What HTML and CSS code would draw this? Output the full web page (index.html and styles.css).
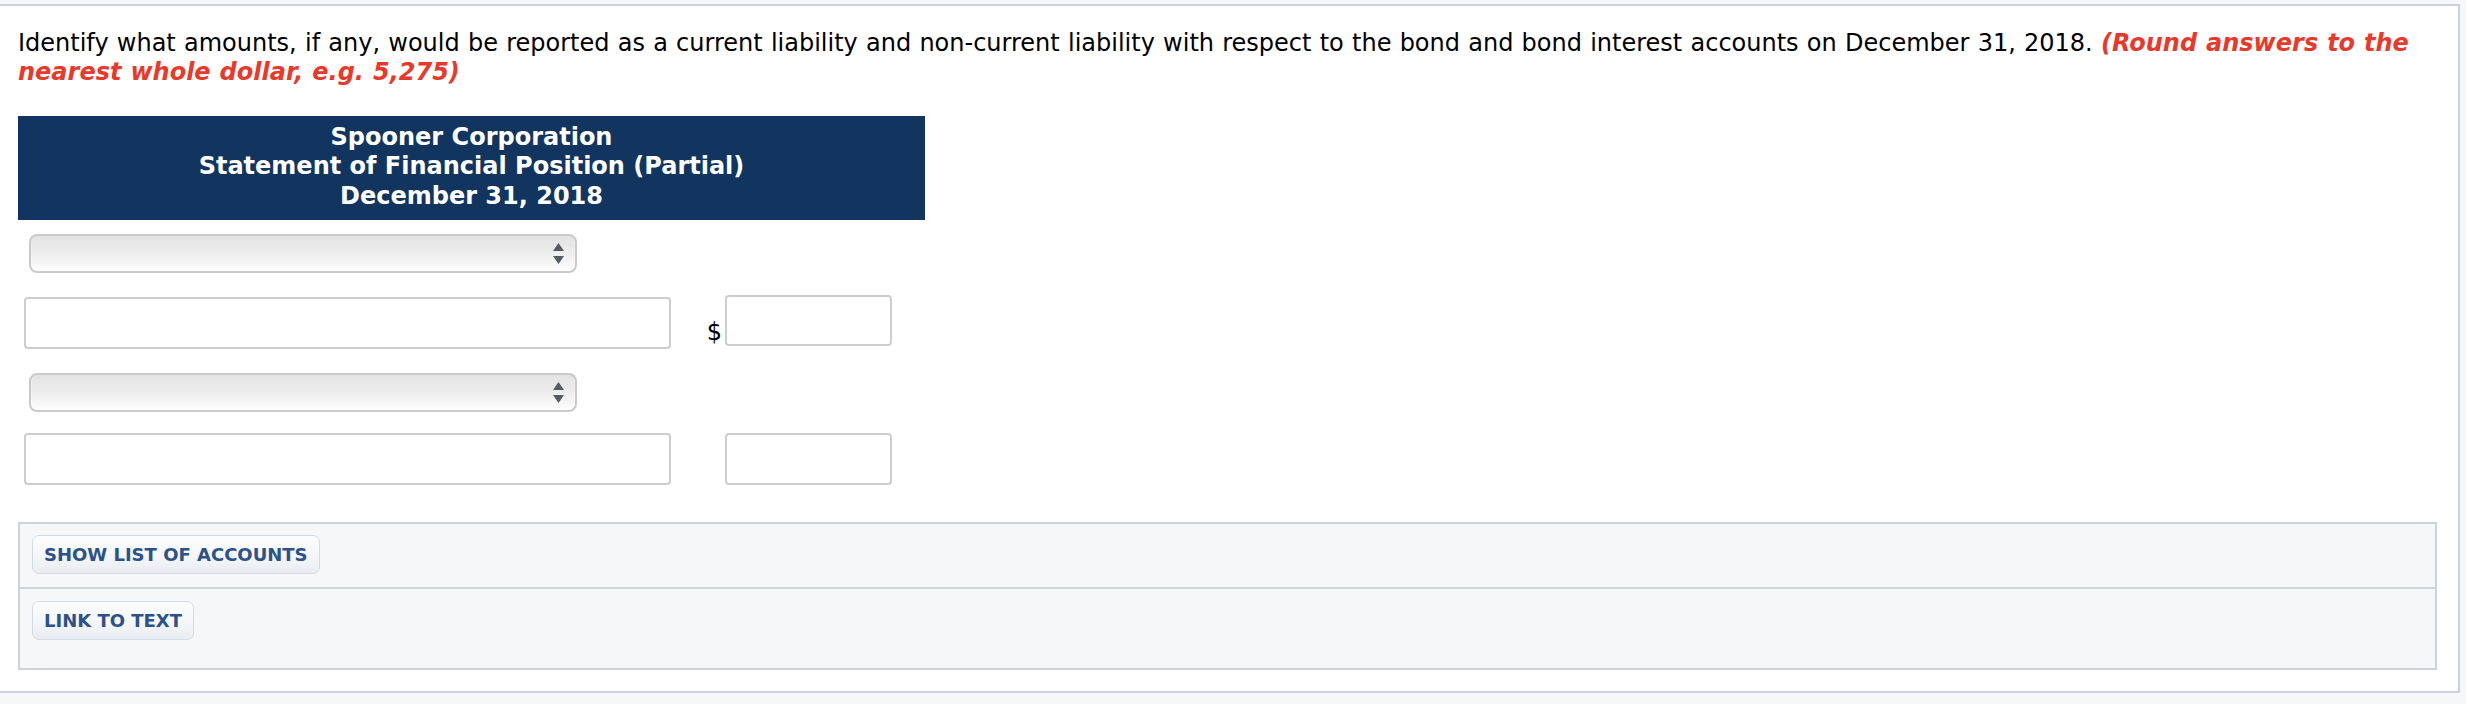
FILE: index.html
```html
<!doctype html>
<html lang="en">
  <head>
    <meta charset="UTF-8" />
    <meta name="viewport" content="width=device-width, initial-scale=1.0" />
    <title>Spooner Corporation - Bonds</title>
    <link rel="stylesheet" href="styles.css">
  </head>
  <body>
    <div class="question">
      <p class="prompt">
        Identify what amounts, if any, would be reported as a current liability and non-current liability with respect to the bond and bond interest accounts on December 31, 2018.
        <em class="hint">(Round answers to the</em>
        <em class="hint">nearest whole dollar, e.g. 5,275)</em>
      </p>

      <!-- Partial balance sheet -->
      <div class="statement">
        <div class="statement-head">
          <div>Spooner Corporation</div>
          <div>Statement of Financial Position (Partial)</div>
          <div>December 31, 2018</div>
        </div>

        <div class="select-row">
          <div class="select-wrap">
            <select class="account-select"><option></option></select>
            <svg class="select-arrows" viewBox="0 0 11 21" width="11" height="21">
              <polygon points="0,8 5.5,0 11,8" />
              <polygon points="0,13 11,13 5.5,21" />
            </svg>
          </div>
        </div>

        <div class="entry-row entry-row-first">
          <input type="text" class="label-input" />
          <span class="currency">$</span>
          <input type="text" class="amount-input amount-first" />
        </div>

        <div class="select-row">
          <div class="select-wrap">
            <select class="account-select"><option></option></select>
            <svg class="select-arrows" viewBox="0 0 11 21" width="11" height="21">
              <polygon points="0,8 5.5,0 11,8" />
              <polygon points="0,13 11,13 5.5,21" />
            </svg>
          </div>
        </div>

        <div class="entry-row entry-row-last">
          <input type="text" class="label-input" />
          <span class="currency"></span>
          <input type="text" class="amount-input" />
        </div>
      </div>

      <!-- Resources -->
      <div class="resources">
        <div class="resource-row">
          <button class="resource-button">SHOW LIST OF ACCOUNTS</button>
        </div>
        <div class="resource-row resource-row-last">
          <button class="resource-button">LINK TO TEXT</button>
        </div>
      </div>
    </div>
  </body>
</html>
```

FILE: styles.css
```css
body {
  margin: 0;
  background: #f5f7fa;
  font-family: Verdana, 'DejaVu Sans', sans-serif;
  color: #000;
}

.question {
  margin: 4px 6px 0 -2px;
  padding: 23px 21px 21px 18px;
  background: #ffffff;
  border: 2px solid #cad3de;
}

.prompt {
  margin: 0;
  font-size: 24px;
  line-height: 29px;
  word-spacing: 0.6px;
}

.hint {
  color: #e8392b;
  font-weight: bold;
  font-style: italic;
}

/* Statement table */
.statement {
  width: 907px;
  margin-top: 29px;
}

.statement-head {
  background: #12355f;
  color: #ffffff;
  font-weight: bold;
  font-size: 24px;
  line-height: 29.3px;
  text-align: center;
  padding: 7px 0 9px 0;
}

.select-row {
  padding-left: 11px;
  margin-top: 24px;
}

.statement-head + .select-row {
  margin-top: 14px;
}

.select-wrap {
  position: relative;
  width: 548px;
  height: 39px;
}

.account-select {
  appearance: none;
  -webkit-appearance: none;
  display: block;
  width: 100%;
  height: 100%;
  margin: 0;
  border: 2px solid #cacaca;
  border-radius: 8px;
  background: linear-gradient(180deg, #e3e3e3 0%, #ececec 45%, #f7f7f7 80%, #fdfdfd 100%);
  box-shadow: inset 0 -2px 2px rgba(255, 255, 255, 0.9);
  font-family: inherit;
  font-size: 18px;
}

.select-arrows {
  position: absolute;
  top: 9px;
  right: 13px;
  fill: #565b61;
  pointer-events: none;
}

.entry-row {
  display: flex;
  align-items: flex-end;
  padding-left: 6px;
  margin-top: 24px;
}

.entry-row-first {
  margin-top: 22px;
}

.entry-row-last {
  margin-top: 21px;
}

.label-input,
.amount-input {
  box-sizing: border-box;
  height: 52px;
  margin: 0;
  border: 2px solid #cdcdcd;
  border-radius: 4px;
  background: #ffffff;
  font-family: inherit;
  font-size: 20px;
  padding: 0 8px;
}

.label-input {
  width: 647px;
}

.currency {
  box-sizing: border-box;
  width: 54px;
  padding-right: 3px;
  text-align: right;
  font-size: 24px;
  line-height: 24px;
  margin-bottom: 5px;
}

.amount-input {
  width: 167px;
}

.amount-first {
  height: 51px;
  margin-bottom: 3px;
}

/* Resource links */
.resources {
  margin-top: 37px;
  border: 2px solid #cad3de;
  background: #f6f7f9;
}

.resource-row {
  padding: 11px 12px 13px 12px;
  border-bottom: 2px solid #cad3de;
}

.resource-row-last {
  padding: 12px 12px 28px 12px;
  border-bottom: none;
}

.resource-button {
  display: block;
  height: 39px;
  padding: 0 11px;
  border: 1.5px solid #d3dbe5;
  border-radius: 7px;
  background: linear-gradient(180deg, #fdfdfe 0%, #f3f5f8 60%, #e8ecf1 100%);
  color: #2c5288;
  font-family: inherit;
  font-size: 18px;
  font-weight: bold;
  cursor: pointer;
}
```
